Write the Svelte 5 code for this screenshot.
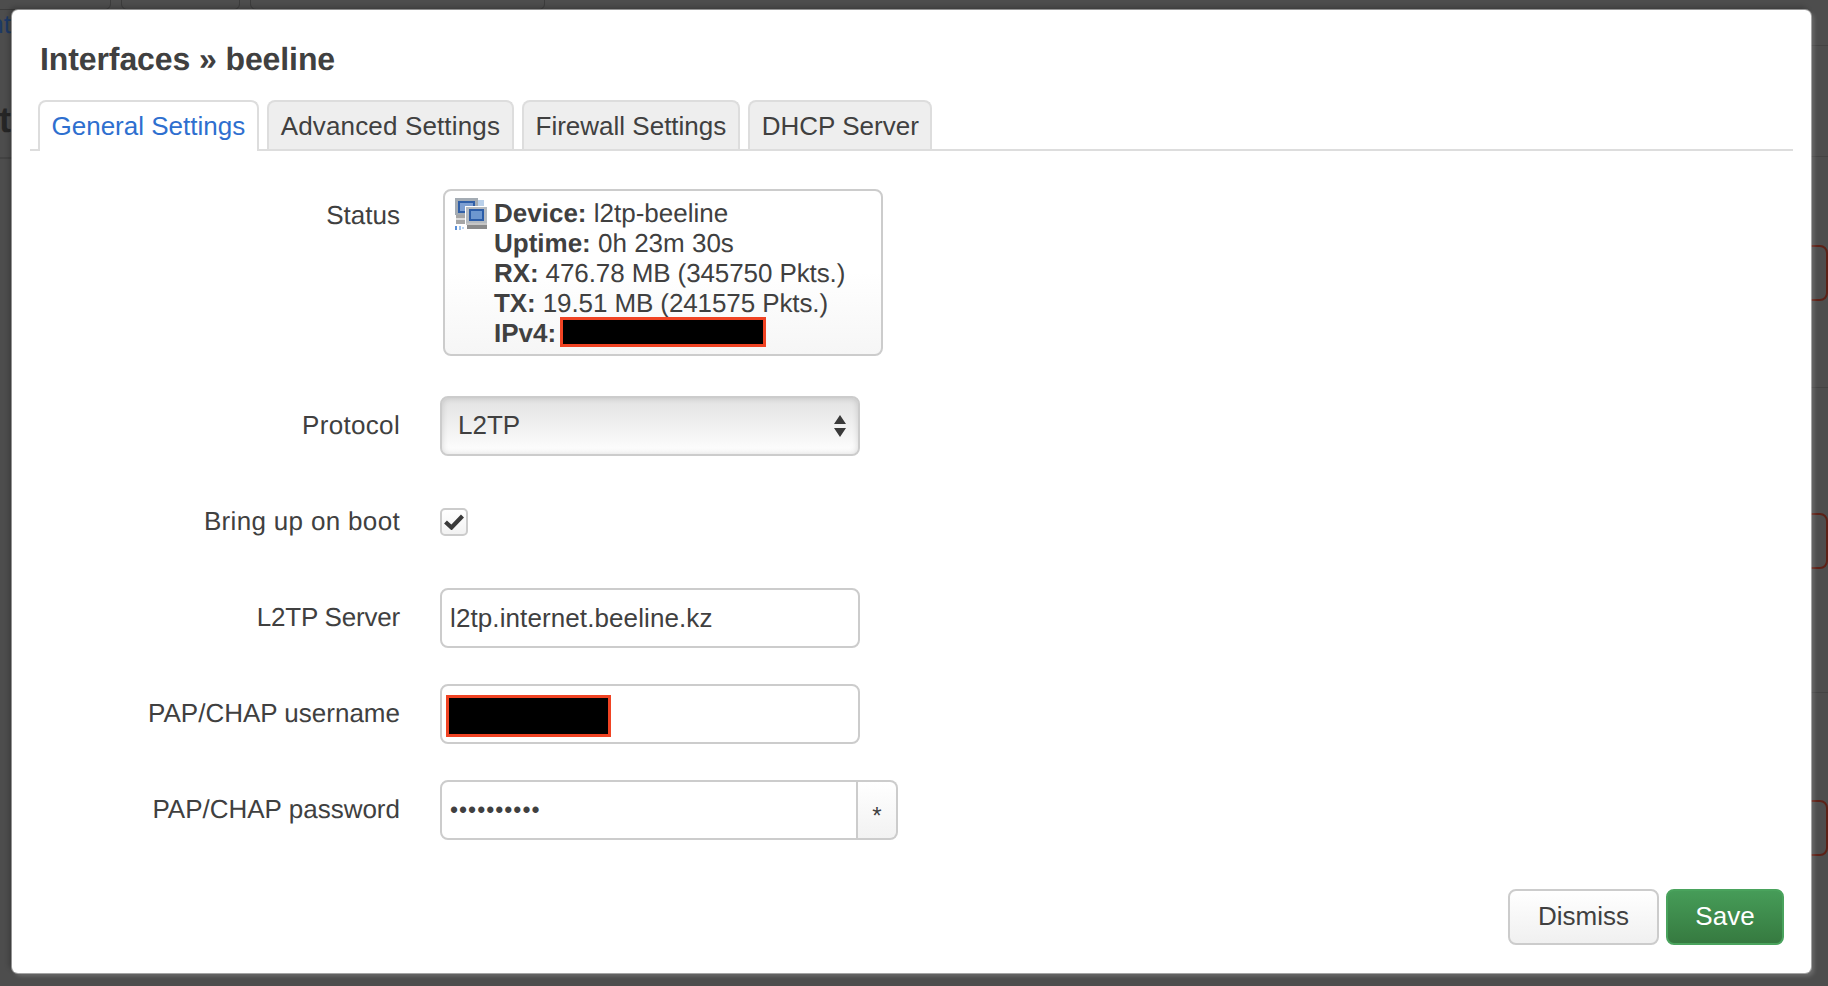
<script lang="ts">
  const tabs = ['General Settings', 'Advanced Settings', 'Firewall Settings', 'DHCP Server']
  const behindTabs = [
    { left: -40, width: 151 },
    { left: 121, width: 119 },
    { left: 250, width: 295 }
  ]
  const behindLines = [45, 156, 387, 692]
  const behindPills = [245, 513, 800]
  let bootEnabled = $state(true)
  let activeTab = $state(0)
</script>

<div class="backdrop">
  <!-- What little of the dimmed page shows round the dialog -->
  {#each behindTabs as tab}
    <span class="behind-tab" style="left: {tab.left}px; width: {tab.width}px"></span>
  {/each}
  <span class="behind-link">nt</span>
  <span class="behind-heading">nt</span>
  <span class="behind-rule-left"></span>
  {#each behindLines as top}
    <span class="behind-rule" style="top: {top}px"></span>
  {/each}
  {#each behindPills as top}
    <span class="behind-pill" style="top: {top}px"></span>
  {/each}

  <div class="modal">
    <h4>Interfaces » beeline</h4>

    <ul class="tabs">
      {#each tabs as tab, index}
        <li class="tab" class:active={activeTab === index}>
          <button onclick={() => (activeTab = index)}>{tab}</button>
        </li>
      {/each}
    </ul>

    <div class="form">
      <div class="row row-status">
        <span class="label">Status</span>
        <div class="status">
          <svg class="status-icon" width="32" height="32" viewBox="0 0 32 32" aria-hidden="true">
            <rect x="23" y="2" width="6" height="7" fill="#b9d0ea" />
            <rect x="0" y="0" width="23" height="17" fill="#a4acb4" />
            <rect x="3" y="3" width="17" height="12" fill="#2f5fa8" />
            <rect x="5" y="5" width="13" height="8" fill="#7d9fd2" />
            <rect x="1" y="17" width="10" height="9" fill="#a6a6a6" />
            <rect x="1" y="20" width="10" height="2" fill="#dcdcdc" />
            <rect x="10" y="8" width="22" height="19" fill="#fff" />
            <rect x="11" y="9" width="21" height="16" fill="#b4bac0" />
            <rect x="14" y="11" width="15" height="12" fill="#2a5ca8" />
            <rect x="16" y="13" width="11" height="8" fill="#6d97cf" />
            <rect x="11" y="25" width="21" height="2" fill="#c6c6c6" />
            <rect x="12" y="27" width="20" height="4" fill="#8a8a8a" />
            <rect x="0" y="28" width="2" height="4" fill="#5a90d8" />
            <rect x="4" y="28" width="2" height="4" fill="#9cc0ea" />
            <rect x="7" y="29" width="2" height="2" fill="#bdd4ef" />
          </svg>
          <div class="status-lines">
            <div><strong>Device:</strong> l2tp-beeline</div>
            <div><strong>Uptime:</strong> 0h 23m 30s</div>
            <div class="narrow"><strong>RX:</strong> 476.78 MB (345750 Pkts.)</div>
            <div class="narrow"><strong>TX:</strong> 19.51 MB (241575 Pkts.)</div>
            <div><strong>IPv4:</strong> <span class="redacted redacted-ip"></span></div>
          </div>
        </div>
      </div>

      <div class="row">
        <label class="label wide" for="proto">Protocol</label>
        <div class="select-wrap">
          <select id="proto">
            <option>L2TP</option>
          </select>
          <svg class="select-arrows" width="12" height="24" viewBox="0 0 12 24" aria-hidden="true">
            <path d="M6 1 L12 10 H0 Z M0 14 H12 L6 23 Z" fill="#3a3a3a" />
          </svg>
        </div>
      </div>

      <div class="row">
        <label class="label wide" for="boot">Bring up on boot</label>
        <label class="check">
          <input id="boot" type="checkbox" bind:checked={bootEnabled} />
          {#if bootEnabled}
            <svg width="20" height="16" viewBox="0 0 20 16" aria-hidden="true">
              <path d="M1.5 8 L7.5 13.5 L18.5 2" fill="none" stroke="#3a3a3a" stroke-width="4.2" />
            </svg>
          {/if}
        </label>
      </div>

      <div class="row">
        <label class="label tight" for="server">L2TP Server</label>
        <input id="server" class="field" type="text" value="l2tp.internet.beeline.kz" />
      </div>

      <div class="row">
        <label class="label" for="user">PAP/CHAP username</label>
        <div class="user-wrap">
          <input id="user" class="field" type="text" />
          <span class="redacted redacted-user"></span>
        </div>
      </div>

      <div class="row">
        <label class="label" for="pass">PAP/CHAP password</label>
        <div class="pass-group">
          <input id="pass" class="field" type="password" value="xxxxxxxxxx" />
          <button class="reveal">*</button>
        </div>
      </div>
    </div>

    <div class="actions">
      <button class="btn">Dismiss</button>
      <button class="btn btn-save">Save</button>
    </div>
  </div>
</div>

<style>
  :global(body) {
    margin: 0;
    background: #4d4d4d;
    overflow: hidden;
  }

  .backdrop {
    position: relative;
    width: 1828px;
    height: 986px;
    padding: 10px 17px 13px 12px;
    box-sizing: border-box;
    background: #4d4d4d;
    overflow: hidden;
    font-family: "Liberation Sans", Arial, sans-serif;
    color: #404040;
    text-rendering: geometricPrecision;
  }

  .behind-tab {
    position: absolute;
    top: -30px;
    height: 40px;
    border: 1px solid #3c3c3c;
    border-radius: 6px;
    box-sizing: border-box;
  }

  .behind-link,
  .behind-heading {
    position: absolute;
    right: 1817px;
    line-height: 30px;
  }

  .behind-link {
    top: 9px;
    font-size: 26px;
    color: #1d3a66;
  }

  .behind-heading {
    top: 105px;
    font-size: 36px;
    font-weight: bold;
    color: #262626;
  }

  .behind-rule-left {
    position: absolute;
    left: 0;
    top: 157px;
    width: 12px;
    height: 2px;
    background: #434343;
  }

  .behind-rule {
    position: absolute;
    right: 0;
    width: 17px;
    height: 1px;
    background: #434343;
  }

  .behind-pill {
    position: absolute;
    right: 0;
    width: 30px;
    height: 56px;
    border: 2px solid #5c2117;
    border-radius: 8px;
    box-sizing: border-box;
  }

  .modal {
    position: relative;
    display: flex;
    flex-direction: column;
    height: 100%;
    box-sizing: border-box;
    padding: 29px 18px 28px 18px;
    background: #fff;
    border-radius: 6px;
    box-shadow:
      0 0 0 1px rgba(205, 205, 205, 0.6),
      3px 3px 4px rgba(255, 255, 255, 0.18),
      -3px -3px 5px rgba(0, 0, 0, 0.22);
  }

  h4 {
    margin: 0 0 0 10px;
    font-size: 32px;
    line-height: 40px;
    font-weight: bold;
    color: #404040;
    letter-spacing: -0.1px;
  }

  .tabs {
    display: flex;
    gap: 8.5px;
    margin: 21px 0 0;
    padding: 0 0 0 8px;
    list-style: none;
    border-bottom: 2px solid #ddd;
    height: 49px;
  }

  .tab {
    height: 51px;
  }

  .tab button {
    height: 49px;
    padding: 0 11.5px;
    font: 26px/1 "Liberation Sans", Arial, sans-serif;
    color: #404040;
    background: #eee;
    border: 2px solid #ddd;
    border-bottom: none;
    border-radius: 8px 8px 0 0;
  }

  .tab:nth-child(2) button {
    letter-spacing: 0.15px;
  }

  .tab.active button {
    height: 51px;
    padding-bottom: 2px;
    color: #2e6fcf;
    background: #fff;
  }

  .form {
    display: flex;
    flex-direction: column;
    gap: 36px;
    margin-top: 38px;
  }

  .row {
    display: grid;
    grid-template-columns: 370px auto;
    column-gap: 40px;
    align-items: center;
    min-height: 60px;
    font-size: 26px;
  }

  .row-status {
    align-items: start;
    margin-bottom: 4px;
  }

  .label {
    text-align: right;
    margin-top: -2px;
  }

  .label.wide {
    letter-spacing: 0.33px;
  }

  .label.tight {
    letter-spacing: -0.2px;
  }

  .row-status .label {
    margin-top: 0;
    line-height: 52px;
  }

  .status {
    display: flex;
    width: 440px;
    height: 167px;
    box-sizing: border-box;
    margin-left: 3px;
    padding: 7px 10px 0;
    gap: 7px;
    border: 2px solid #ccc;
    border-radius: 8px;
    background: linear-gradient(#fff 50%, #f6f6f6);
  }

  .status-icon {
    flex: none;
  }

  .status-lines {
    line-height: 30px;
    white-space: nowrap;
  }

  .narrow {
    letter-spacing: -0.1px;
  }

  .redacted {
    display: inline-block;
    background: #000;
    border: 3px solid #f04323;
    box-sizing: border-box;
  }

  .redacted-ip {
    width: 206px;
    height: 30px;
    vertical-align: top;
    margin-top: -1px;
    margin-left: -3px;
  }

  .select-wrap,
  .user-wrap {
    position: relative;
    width: 420px;
    height: 60px;
  }

  select {
    width: 100%;
    height: 100%;
    padding: 0 16px 2px;
    appearance: none;
    font: 26px "Liberation Sans", Arial, sans-serif;
    color: #404040;
    border: 2px solid #ccc;
    border-radius: 8px;
    background: linear-gradient(#e2e2e2, #f0f0f0 50%, #fff);
    box-shadow: inset 0 0 6px rgba(0, 0, 0, 0.15);
  }

  .select-arrows {
    position: absolute;
    right: 14px;
    top: 18px;
  }

  .check {
    position: relative;
    display: flex;
    align-items: center;
    justify-content: center;
    width: 28px;
    height: 28px;
    box-sizing: border-box;
    border: 2px solid #ccc;
    border-radius: 5px;
    background: linear-gradient(#fff, #f2f2f2);
  }

  .check input {
    position: absolute;
    inset: 0;
    margin: 0;
    opacity: 0;
  }

  .field {
    width: 420px;
    height: 60px;
    box-sizing: border-box;
    padding: 0 8px;
    font: 26px "Liberation Sans", Arial, sans-serif;
    letter-spacing: 0.1px;
    color: #404040;
    background: #fff;
    border: 2px solid #ccc;
    border-radius: 8px;
    outline: none;
  }

  .redacted-user {
    position: absolute;
    left: 6px;
    top: 11px;
    width: 165px;
    height: 42px;
  }

  .pass-group {
    display: flex;
    height: 60px;
  }

  .pass-group .field {
    width: 418px;
    font-size: 23px;
    letter-spacing: 1px;
    border-radius: 8px 0 0 8px;
  }

  .reveal {
    width: 40px;
    height: 60px;
    padding: 11px 0 0;
    font: 24px "Liberation Sans", Arial, sans-serif;
    color: #404040;
    background: linear-gradient(#fff, #f2f2f2);
    border: 2px solid #ccc;
    border-left: none;
    border-radius: 0 8px 8px 0;
  }

  .actions {
    display: flex;
    justify-content: flex-end;
    gap: 7px;
    margin-top: auto;
    margin-right: 9px;
  }

  .btn {
    width: 151px;
    height: 56px;
    padding: 0 0 2px;
    font: 26px "Liberation Sans", Arial, sans-serif;
    color: #404040;
    background: linear-gradient(#fff, #f0f0f0);
    border: 2px solid #ccc;
    border-radius: 8px;
  }

  .btn-save {
    width: 118px;
    color: #fff;
    background: linear-gradient(#469c58, #367a40);
    border-color: #4aa35d;
  }
</style>
